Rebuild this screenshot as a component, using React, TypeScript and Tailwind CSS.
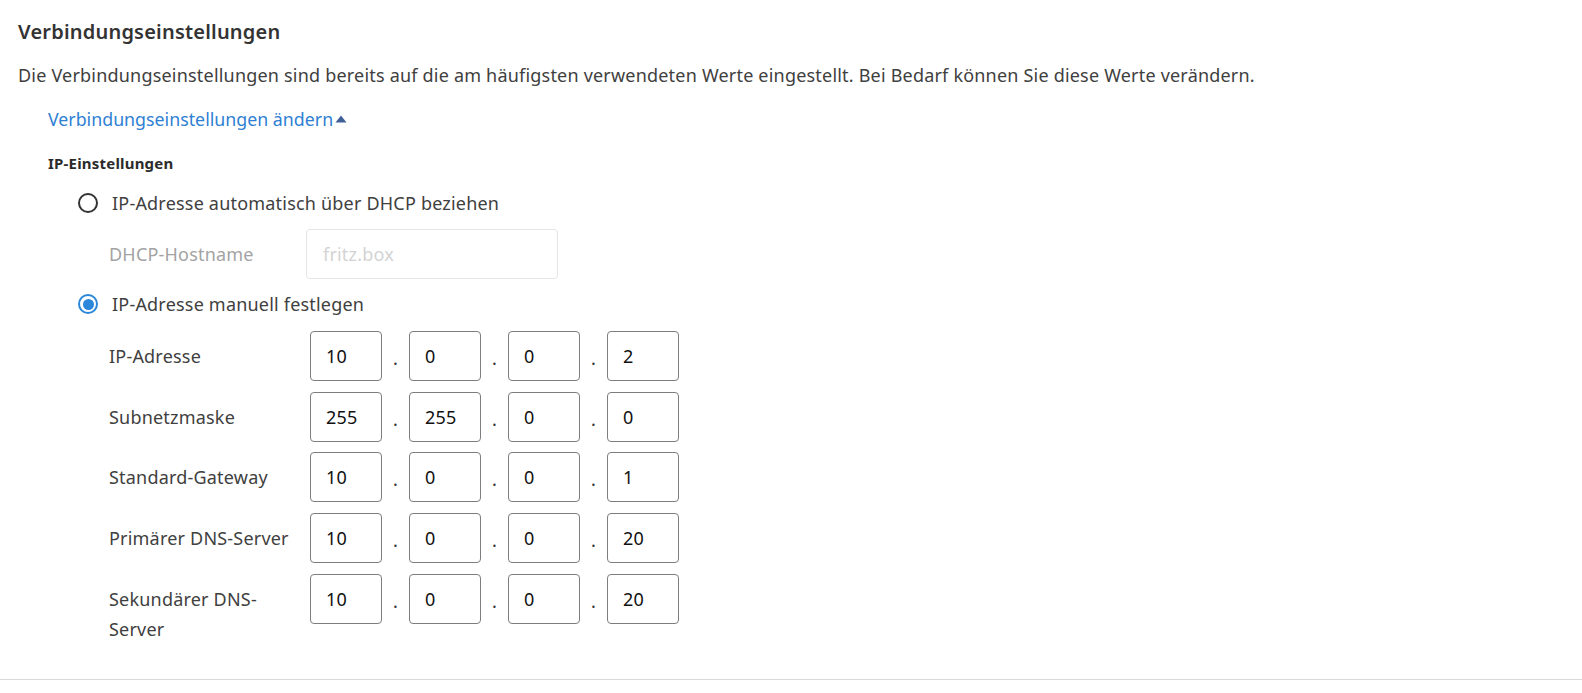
import React from "react";

type Row = { label: string; values: string[] };

const rows: Row[] = [
  { label: "IP-Adresse", values: ["10", "0", "0", "2"] },
  { label: "Subnetzmaske", values: ["255", "255", "0", "0"] },
  { label: "Standard-Gateway", values: ["10", "0", "0", "1"] },
  { label: "Primärer DNS-Server", values: ["10", "0", "0", "20"] },
  { label: "Sekundärer DNS-Server", values: ["10", "0", "0", "20"] },
];

const rowMargins = ["mt-[13px]", "mt-[11px]", "mt-[10px]", "mt-[11px]", "mt-[11px]"];

function Radio({ checked }: { checked: boolean }) {
  if (checked) {
    return (
      <span className="flex h-[20px] w-[20px] shrink-0 items-center justify-center rounded-full border-2 border-[#2b87da] bg-white">
        <span className="h-[11px] w-[11px] rounded-full bg-[#2b87da]" />
      </span>
    );
  }
  return <span className="block h-[20px] w-[20px] shrink-0 rounded-full border-2 border-[#333333] bg-white" />;
}

function OctetBox({ value }: { value: string }) {
  return (
    <div className="flex h-[50px] w-[72px] items-center rounded-[4px] border border-[#7d7d7d] bg-white pl-[15px] text-[18px] text-[#111111]">
      {value}
    </div>
  );
}

export default function App() {
  return (
    <div className="min-h-[693px] bg-white font-['Noto_Sans',sans-serif] tracking-[0.2px] text-[#404040]">
      <div className="pl-[18px] pt-[18px]">
        <h2 className="text-[20px] font-semibold leading-[28px] text-[#333333]">Verbindungseinstellungen</h2>
        <p className="mt-[15px] text-[18px] leading-[28px]">
          Die Verbindungseinstellungen sind bereits auf die am häufigsten verwendeten Werte eingestellt. Bei Bedarf können Sie diese Werte verändern.
        </p>

        <div className="pl-[30px]">
          <div className="mt-[16px] flex h-[28px] items-center text-[17.8px] leading-[28px] tracking-normal text-[#2f80d3]">
            <span>Verbindungseinstellungen ändern</span>
            <svg width="12" height="8" viewBox="0 0 12 8" className="ml-[2px]">
              <path d="M6 0.5 L11.5 7.5 L0.5 7.5 Z" fill="#41609a" />
            </svg>
          </div>

          <div className="mt-[20px] text-[15px] font-bold leading-[20px] text-[#2b2b2b]">IP-Einstellungen</div>

          <div className="pl-[30px]">
            <div className="mt-[16px] flex h-[28px] items-center gap-[14px] text-[18px]">
              <Radio checked={false} />
              <span>IP-Adresse automatisch über DHCP beziehen</span>
            </div>

            <div className="mt-[12px] flex items-center pl-[31px]">
              <div className="w-[197px] text-[18px] text-[#a3a3a3]">DHCP-Hostname</div>
              <div className="flex h-[50px] w-[252px] items-center rounded-[4px] border border-[#e6e6e6] pl-[16px] text-[18px] text-[#d3d3d3]">
                fritz.box
              </div>
            </div>

            <div className="mt-[11px] flex h-[28px] items-center gap-[14px] text-[18px]">
              <Radio checked={true} />
              <span>IP-Adresse manuell festlegen</span>
            </div>

            <div className="pl-[31px]">
              {rows.map((row, i) => (
                <div key={row.label} className={`${rowMargins[i]} flex items-start`}>
                  <div className="w-[201px] shrink-0 pr-[12px] pt-[10px] text-[18px] leading-[30px]">{row.label}</div>
                  <div className="flex items-center">
                    {row.values.map((v, j) => (
                      <React.Fragment key={j}>
                        {j > 0 && (
                          <span className="w-[27px] pt-[4px] text-center text-[18px] text-[#333333]">.</span>
                        )}
                        <OctetBox value={v} />
                      </React.Fragment>
                    ))}
                  </div>
                </div>
              ))}
            </div>
          </div>
        </div>
      </div>
      <div className="mt-[35px] h-px w-full bg-[#d9d9d9]" />
    </div>
  );
}
